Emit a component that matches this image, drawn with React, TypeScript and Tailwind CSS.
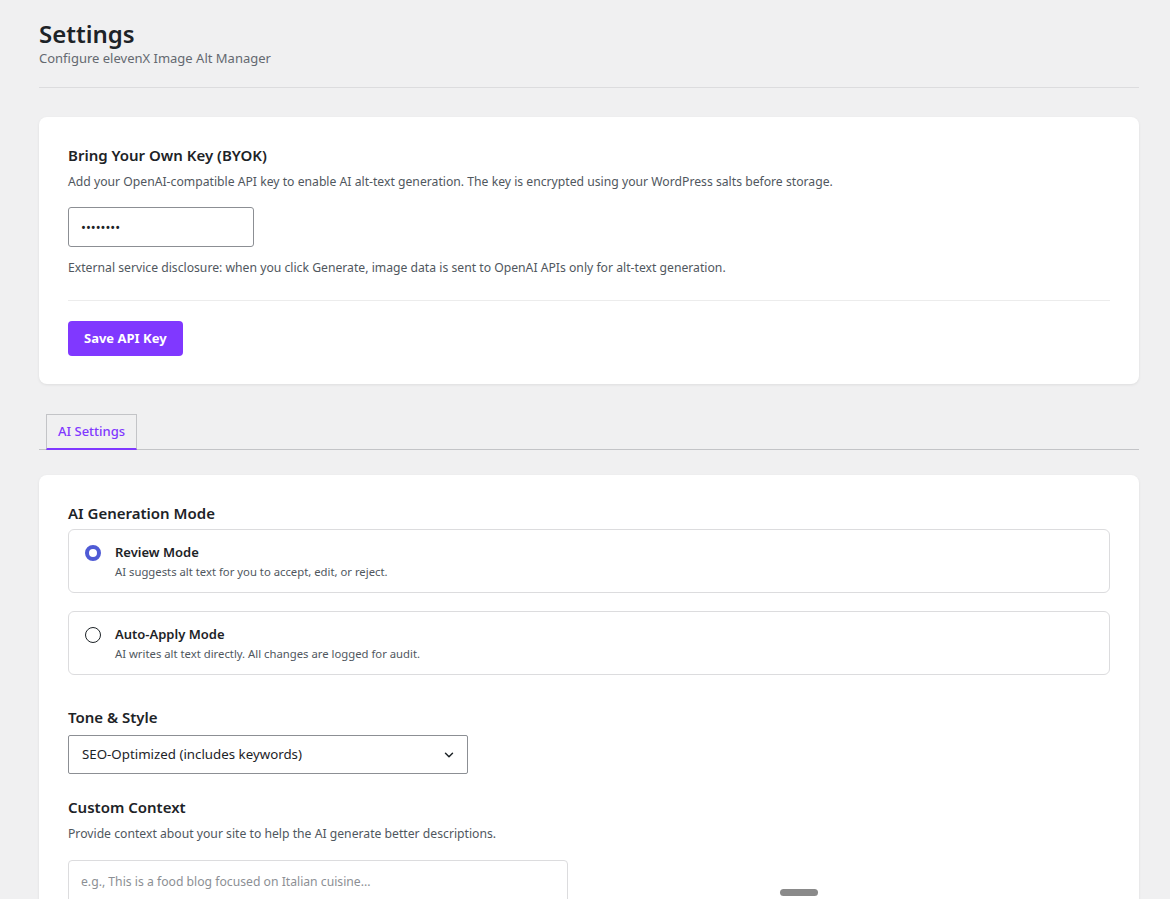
import { useState } from 'react';

export default function App() {
  const [mode, setMode] = useState<'review' | 'auto'>('review');

  return (
    <div className="min-h-screen bg-[#f0f0f1] text-[#1d2327] relative" style={{ fontFamily: '"Noto Sans", "Open Sans", sans-serif' }}>
      <div className="ml-[39px] mr-[31px] pt-[18px]">
        {/* Header */}
        <h1 className="text-[24px] leading-[32px] font-semibold text-[#1d2327]">Settings</h1>
        <p className="text-[13px] leading-[16px] text-[#646970]">Configure elevenX Image Alt Manager</p>
        <div className="mt-[21px] border-t border-[#dcdcde]" />

        {/* BYOK card */}
        <section className="mt-[29px] bg-white rounded-lg shadow-[0_1px_3px_rgba(0,0,0,0.08)] px-[29px] pt-[27px] pb-[28px]">
          <h2 className="text-[15px] leading-[22px] font-semibold">Bring Your Own Key (BYOK)</h2>
          <p className="mt-[7px] text-[12.2px] leading-[18px] text-[#50575e]">
            Add your OpenAI-compatible API key to enable AI alt-text generation. The key is encrypted using your WordPress salts before storage.
          </p>
          <input
            type="password"
            defaultValue="sk-12345"
            className="mt-[16px] block w-[186px] h-[40px] px-[12px] text-[13px] border border-[#8c8f94] rounded-[3px] bg-white outline-none"
          />
          <p className="mt-[12px] text-[12.2px] leading-[18px] text-[#50575e]">
            External service disclosure: when you click Generate, image data is sent to OpenAI APIs only for alt-text generation.
          </p>
          <div className="mt-[23px] border-t border-[#ececec]" />
          <button className="mt-[20px] h-[35px] px-[16px] rounded-[4px] bg-[#8038ff] text-white text-[13px] font-bold">
            Save API Key
          </button>
        </section>

        {/* Tabs */}
        <div className="mt-[30px] flex border-b border-[#c3c4c7] pl-[7px]">
          <button className="h-[36px] px-[11px] -mb-px border border-[#c3c4c7] border-b-2 border-b-[#8038ff] bg-[#f0f0f1] text-[13px] font-medium text-[#8038ff]">
            AI Settings
          </button>
        </div>

        {/* AI settings card */}
        <section className="mt-[25px] bg-white rounded-t-lg shadow-[0_1px_3px_rgba(0,0,0,0.08)] px-[29px] pt-[27px] pb-[40px]">
          <h2 className="text-[15px] leading-[22px] font-semibold">AI Generation Mode</h2>
          <div className="mt-[5px] flex flex-col gap-[18px]">
            <RadioCard
              checked={mode === 'review'}
              onClick={() => setMode('review')}
              title="Review Mode"
              desc="AI suggests alt text for you to accept, edit, or reject."
            />
            <RadioCard
              checked={mode === 'auto'}
              onClick={() => setMode('auto')}
              title="Auto-Apply Mode"
              desc="AI writes alt text directly. All changes are logged for audit."
            />
          </div>

          <h2 className="mt-[31px] text-[15px] leading-[22px] font-semibold">Tone &amp; Style</h2>
          <div className="mt-[7px] w-[400px] h-[39px] border border-[#8c8f94] rounded-[2px] flex items-center justify-between pl-[13px] pr-[11px] text-[13.3px]">
            <span>SEO-Optimized (includes keywords)</span>
            <svg width="14" height="14" viewBox="0 0 24 24" fill="none" stroke="#1d2327" strokeWidth="2.5" strokeLinecap="round" strokeLinejoin="round">
              <path d="M6 9l6 6 6-6" />
            </svg>
          </div>

          <h2 className="mt-[22px] text-[15px] leading-[22px] font-semibold">Custom Context</h2>
          <p className="mt-[7px] text-[12.2px] leading-[18px] text-[#50575e]">
            Provide context about your site to help the AI generate better descriptions.
          </p>
          <textarea
            placeholder="e.g., This is a food blog focused on Italian cuisine..."
            className="mt-[17px] block w-[500px] h-[90px] px-[12px] py-[12px] text-[12.2px] border border-[#dcdcde] rounded-[4px] outline-none resize-none placeholder:text-[#8c8f94]"
          />
        </section>
      </div>

      {/* overlay handle */}
      <div className="absolute left-[780px] top-[889px] w-[38px] h-[7px] rounded-full bg-[#8a8a8a]" />
    </div>
  );
}

function RadioCard({ checked, onClick, title, desc }: { checked: boolean; onClick: () => void; title: string; desc: string }) {
  return (
    <div onClick={onClick} className="h-[64px] border border-[#dcdcde] rounded-[6px] flex items-start pl-[16px] pt-[13px] cursor-pointer">
      {checked ? (
        <span className="mt-[2px] w-[16px] h-[16px] rounded-full border-[4px] border-[#4f5bd5] bg-white shrink-0" />
      ) : (
        <span className="mt-[2px] w-[16px] h-[16px] rounded-full border-[1.5px] border-[#1d2327] bg-white shrink-0" />
      )}
      <div className="ml-[14px]">
        <div className="text-[13px] leading-[18px] font-semibold">{title}</div>
        <div className="mt-[3px] text-[11.3px] leading-[16px] text-[#50575e]">{desc}</div>
      </div>
    </div>
  );
}
